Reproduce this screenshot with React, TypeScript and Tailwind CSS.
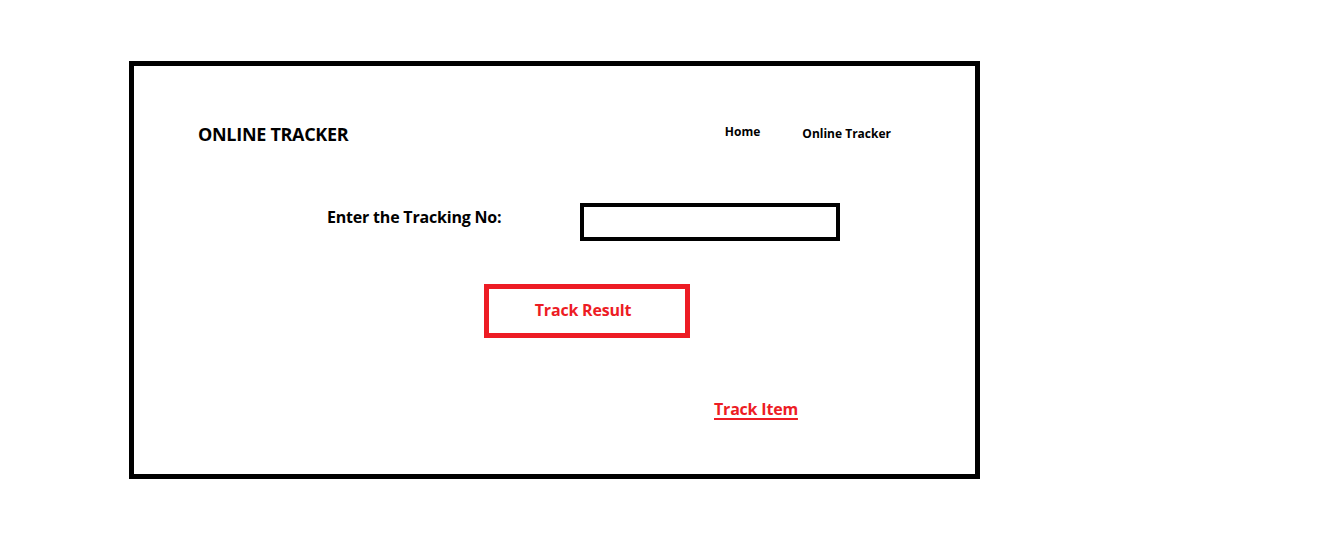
import React from 'react';

export default function App() {
  return (
    <div className="min-h-[558px] w-[1324px] bg-white pt-[61px] pl-[129px] font-['Open_Sans',sans-serif]">
      <div className="w-[851px] h-[418px] border-[5px] border-black flex flex-col">

        {/* Header */}
        <div className="flex items-center mt-[57px] h-[22px]">
          <h1 className="ml-[64px] text-[18px] font-bold text-black tracking-[-0.3px]">ONLINE TRACKER</h1>
          <nav className="ml-auto mr-[84px] flex items-center gap-[40px] text-[12px] font-bold text-black">
            <a href="#" className="-mt-[4px] mr-[2px]">Home</a>
            <a href="#">Online Tracker</a>
          </nav>
        </div>

        {/* Tracking form */}
        <div className="flex items-start mt-[58px]">
          <label className="ml-[193px] w-[253px] mt-[2px] text-[16px] font-bold text-black tracking-[-0.2px]">
            Enter the Tracking No:
          </label>
          <input type="text" className="w-[260px] h-[38px] border-4 border-black outline-none" />
        </div>

        <div className="mt-[43px]">
          <button className="ml-[350px] w-[206px] h-[54px] border-[5px] border-[#ed1c24] text-[16px] font-bold text-[#ed1c24] pr-[8px] pb-[3px] tracking-[-0.2px]">
            Track Result
          </button>
        </div>

        <div className="mt-[59px]">
          <a href="#" className="ml-[580px] text-[16px] font-bold text-[#ed1c24] underline underline-offset-[3px] decoration-2 tracking-[-0.2px]">
            Track Item
          </a>
        </div>

      </div>
    </div>
  );
}
